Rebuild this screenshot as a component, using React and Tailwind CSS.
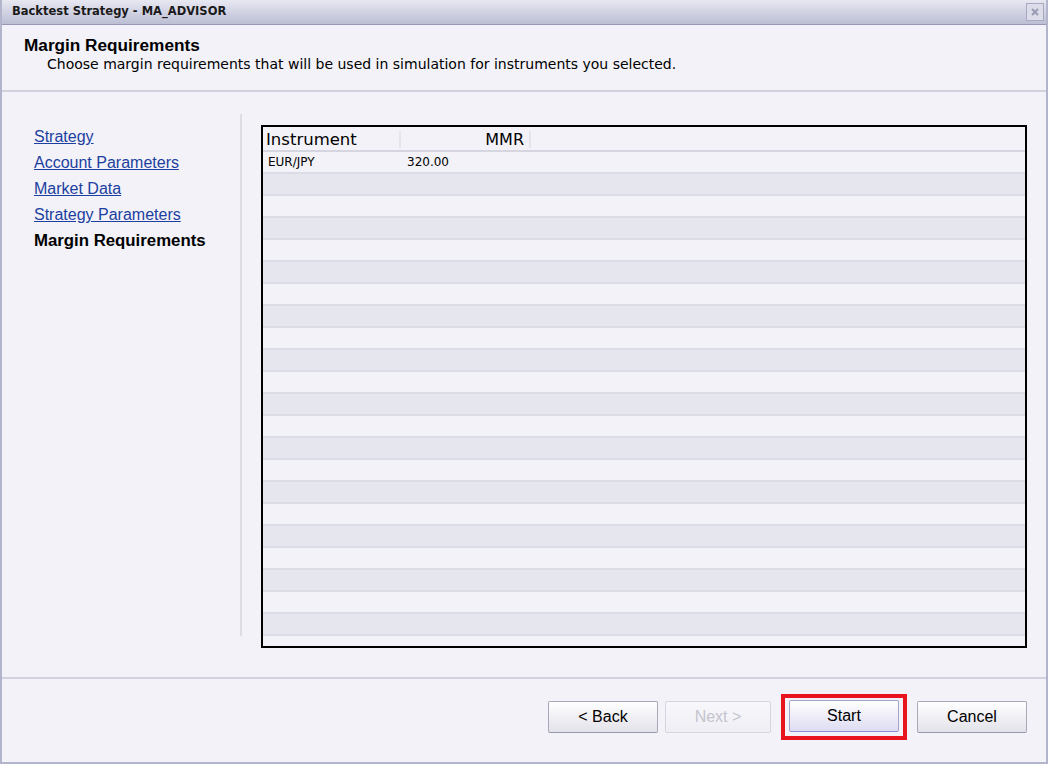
import React from 'react';

const navItems = [
  { label: 'Strategy', active: false },
  { label: 'Account Parameters', active: false },
  { label: 'Market Data', active: false },
  { label: 'Strategy Parameters', active: false },
  { label: 'Margin Requirements', active: true },
];

const rows = [{ instrument: 'EUR/JPY', mmr: '320.00' }];
for (let i = 0; i < 22; i++) rows.push({ instrument: '', mmr: '' });

function Button({ children, disabled, primary }) {
  return (
    <button
      type="button"
      disabled={disabled}
      className={`w-[110px] h-[32px] rounded-[2px] border text-[16px] bg-gradient-to-b ${
        disabled
          ? 'border-[#d6d6e0] text-[#c4c4cc] from-[#f8f8fc] to-[#eeeef4]'
          : primary
          ? 'border-[#a4a4c8] border-b-[#8e8ed4] text-black from-[#ffffff] to-[#dedcf2]'
          : 'border-[#a8a8b8] border-b-[#9898a8] text-black from-[#ffffff] to-[#e2e2ea]'
      }`}
    >
      {children}
    </button>
  );
}

export default function App() {
  return (
    <div
      className="w-[1048px] h-[764px] bg-[#f2f2f8] border-l-2 border-r-2 border-b-2 border-[#b3b5cc] flex flex-col overflow-hidden"
      style={{ fontFamily: '"Liberation Sans", Arial, sans-serif' }}
    >
      {/* title bar */}
      <div className="h-[25px] flex items-center justify-between pl-[10px] pr-[2px] bg-gradient-to-b from-[#e8e8f2] to-[#bcbed4] border-b border-[#9597b4] shrink-0">
        <span className="text-[11.5px] font-bold text-[#1a1a1a]" style={{ fontFamily: '"DejaVu Sans", Verdana, sans-serif' }}>
          Backtest Strategy - MA_ADVISOR
        </span>
        <div className="w-[18px] h-[18px] border border-[#a8aac4] bg-[#dcdde8] flex items-center justify-center">
          <svg width="8" height="8" viewBox="0 0 8 8">
            <path d="M1 1L7 7M7 1L1 7" stroke="#9a9cb4" strokeWidth="2" />
          </svg>
        </div>
      </div>

      {/* header */}
      <div className="h-[67px] border-b-2 border-[#d2d2de] pl-[22px] pt-[11px] shrink-0">
        <div className="text-[17.2px] font-bold text-black leading-[18px]">Margin Requirements</div>
        <div className="text-[14px] text-black leading-[18px] pl-[23px] mt-[1px]" style={{ fontFamily: '"DejaVu Sans", Tahoma, sans-serif' }}>
          Choose margin requirements that will be used in simulation for instruments you selected.
        </div>
      </div>

      {/* body */}
      <div className="h-[587px] flex shrink-0 border-b-2 border-[#d2d2de]">
        <div className="w-[240px] pt-[22px] pb-[41px] shrink-0 flex">
          <div className="flex-1 border-r-2 border-[#dcdce4] pl-[32px] pt-[13px] flex flex-col gap-[6px]">
            {navItems.map((item) =>
              item.active ? (
                <span key={item.label} className="text-[16.8px] font-bold text-black leading-[20px]">
                  {item.label}
                </span>
              ) : (
                <a key={item.label} href="#" className="text-[16px] text-[#1c3fa0] underline leading-[20px] w-fit">
                  {item.label}
                </a>
              )
            )}
          </div>
        </div>

        <div className="pl-[19px] pt-[33px]">
          <div className="w-[766px] h-[523px] border-2 border-black overflow-hidden bg-[#f2f2f8]" style={{ fontFamily: '"DejaVu Sans", Tahoma, sans-serif' }}>
            <div className="h-[25px] flex items-center border-b-2 border-[#d6d6e0] pt-[2px]">
              <div className="w-[138px] pl-[3px] text-[16.5px] text-black border-r-2 border-[#e4e4ec] h-[17px] leading-[17px]">Instrument</div>
              <div className="w-[130px] pr-[5px] text-right text-[16px] text-black border-r-2 border-[#e4e4ec] h-[17px] leading-[17px]">MMR</div>
            </div>
            {rows.map((row, i) => (
              <div
                key={i}
                className={`h-[22px] flex items-center border-b-2 border-[#dcdce6] ${i % 2 === 1 ? 'bg-[#e6e6ef]' : 'bg-[#f2f2f8]'}`}
              >
                <div className="w-[144px] pl-[5px] text-[12px] text-black">{row.instrument}</div>
                <div className="text-[12px] text-black">{row.mmr}</div>
              </div>
            ))}
          </div>
        </div>
      </div>

      {/* footer */}
      <div className="flex-1 flex items-start justify-end pr-[19px] pt-[15px]">
        <div className="flex items-center">
          <Button>&lt; Back</Button>
          <div className="w-[7px]" />
          <button
            type="button"
            disabled
            className="w-[106px] h-[32px] rounded-[2px] border border-[#d6d6e0] text-[#c4c4cc] text-[16px] bg-gradient-to-b from-[#f8f8fc] to-[#eeeef4]"
          >
            Next &gt;
          </button>
          <div className="w-[10px]" />
          <div className="border-[4px] border-[#e8141e] px-[4px] pt-[2px] pb-[4px]">
            <Button primary>Start</Button>
          </div>
          <div className="w-[10px]" />
          <Button>Cancel</Button>
        </div>
      </div>
    </div>
  );
}
